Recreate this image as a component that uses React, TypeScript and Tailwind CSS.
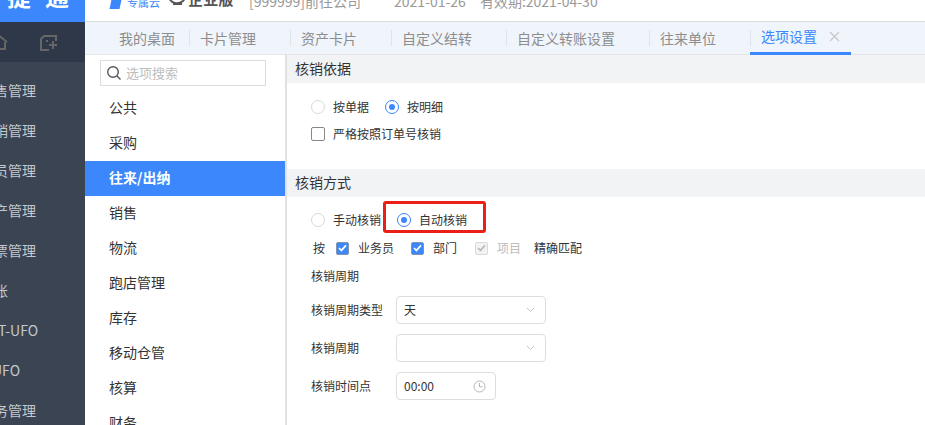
const font = { fontFamily: '"Noto Sans CJK SC", "Liberation Sans", sans-serif' };

const tabs = ["我的桌面", "卡片管理", "资产卡片", "自定义结转", "自定义转账设置", "往来单位"];
const navItems = [
  { text: "销售管理", offset: "ml-[-20px]" },
  { text: "营销管理", offset: "ml-[-20px]" },
  { text: "人员管理", offset: "ml-[-20px]" },
  { text: "资产管理", offset: "ml-[-20px]" },
  { text: "发票管理", offset: "ml-[-20px]" },
  { text: "总账", offset: "ml-[-20px]" },
  { text: "T-UFO", offset: "ml-[-2px]" },
  { text: "UFO", offset: "ml-[-8px]" },
  { text: "财务管理", offset: "ml-[-20px]" },
];
const options = ["公共", "采购", "往来/出纳", "销售", "物流", "跑店管理", "库存", "移动仓管", "核算", "财务"];

function Radio({ checked }: { checked?: boolean }) {
  return (
    <span
      className={`flex h-[14px] w-[14px] shrink-0 items-center justify-center rounded-full border bg-white ${
        checked ? "border-[#3b87fb]" : "border-[#d9d9d9]"
      }`}
    >
      {checked && <span className="h-[6px] w-[6px] rounded-full bg-[#3b87fb]" />}
    </span>
  );
}

function Check({ disabled }: { disabled?: boolean }) {
  return (
    <span
      className={`flex h-[13px] w-[13px] shrink-0 items-center justify-center rounded-[2px] border ${
        disabled ? "border-[#d9d9d9] bg-[#f3f3f3]" : "border-[#7f93ad] bg-[#3b87fb]"
      }`}
    >
      <svg width="9" height="8" viewBox="0 0 9 8" fill="none">
        <path d="M1 4l2.4 2.4L8 1.4" stroke={disabled ? "#bbbbbb" : "#ffffff"} strokeWidth="1.7" />
      </svg>
    </span>
  );
}

function SectionTitle({ text }: { text: string }) {
  return <div className="flex h-[28px] items-center bg-[#f2f3f5] pb-[2px] pl-[8px] text-[14px] text-[#333]">{text}</div>;
}

function SelectRow({ label, value }: { label: string; value?: string }) {
  return (
    <div className="flex h-[28px] items-center">
      <span className="w-[109px] shrink-0 pl-[24px] whitespace-nowrap">{label}</span>
      <div className="flex h-[28px] w-[150px] items-center justify-between rounded-[4px] border border-[#dedede] pr-[10px] pl-[7px]">
        <span>{value}</span>
        <svg width="9" height="6" viewBox="0 0 9 6" fill="none">
          <path d="M1 1l3.5 3.5L8 1" stroke="#c4c4c4" />
        </svg>
      </div>
    </div>
  );
}

export default function App() {
  return (
    <div className="flex h-[425px] w-[925px] overflow-hidden bg-white" style={font}>
      <div className="flex w-[85px] shrink-0 flex-col overflow-hidden bg-[#3a4453]">
        <div className="flex h-[22px] shrink-0 items-end gap-[14px] overflow-hidden bg-[#3b87fb] pb-[14px] pl-[7px] text-[24px] leading-none font-bold text-white">
          <span className="whitespace-nowrap">捷</span>
          <span className="whitespace-nowrap">通</span>
        </div>
        <div className="flex h-[40px] shrink-0 items-center justify-between bg-[#2e3848] pr-[28px]">
          <svg className="ml-[-9px]" width="17" height="17" viewBox="0 0 17 17" fill="none" stroke="#666" strokeWidth="2">
            <path d="M8.5 2L16 8M3 8v7h11V8" />
          </svg>
          <svg width="17" height="17" viewBox="0 0 17 17" fill="none" stroke="#666" strokeWidth="2">
            <path d="M16 7V2H4L1 5v11h8M13 7v8M9 11h8M6 7h2" />
          </svg>
        </div>
        <div className="flex flex-col pt-[8px]">
          {navItems.map((item) => (
            <div
              key={item.text}
              className={`flex h-[40px] shrink-0 items-center text-[14px] whitespace-nowrap text-[#c3c8ce] ${item.offset}`}
            >
              {item.text}
            </div>
          ))}
        </div>
      </div>

      <div className="flex min-w-0 flex-1 flex-col">
        <div className="flex h-[22px] shrink-0 items-end overflow-hidden border-b border-[#dcdcdc] bg-white whitespace-nowrap">
          <div className="mb-[13px] flex items-end leading-none">
            <span className="mb-[-1px] ml-[26px] h-[14px] w-[10px] -skew-x-12 bg-[#3b87fb]" />
            <span className="ml-[6px] text-[11px] text-[#3b87fb]">专属云</span>
            <svg className="mb-[2px] ml-[7px]" width="21" height="14" viewBox="0 0 21 14" fill="none" stroke="#555" strokeWidth="2">
              <path d="M1 4c3 8 10 9 15 5l3-4M6 12h9" />
            </svg>
            <span className="mb-[2px] text-[15px] font-bold tracking-[0.3px] text-[#555]">企业版</span>
            <span className="ml-[15px] text-[14px] text-[#999]">[999999]前往公司</span>
            <span className="ml-[33px] text-[14px] text-[#999]">2021-01-26</span>
            <span className="ml-[14px] text-[14px] text-[#999]">有效期:2021-04-30</span>
          </div>
        </div>

        <div className="flex h-[33px] shrink-0 items-center border-b border-[#e3e5e9] bg-[#f0f4fb] pl-[24px] text-[14px] text-[#8d8d8d]">
          {tabs.map((tab, i) => (
            <div
              key={tab}
              className={`flex h-[16px] items-center border-r border-[#dfe3ea] pl-[10px] whitespace-nowrap ${
                i === 0 ? "pr-[14px]" : "pr-[34px]"
              }`}
            >
              {tab}
            </div>
          ))}
          <div className="ml-[-1px] flex h-[33px] w-[101px] items-center border-b-[3px] border-[#3b87fb] pl-[11px] whitespace-nowrap text-[#3b87fb]">
            选项设置
            <svg className="ml-[12px]" width="11" height="11" viewBox="0 0 11 11" fill="none">
              <path d="M1 1l9 9M10 1l-9 9" stroke="#c6c9cd" strokeWidth="1.3" />
            </svg>
          </div>
        </div>

        <div className="flex min-h-0 flex-1">
          <div className="w-[202px] shrink-0 overflow-hidden border-r-2 border-[#e1e1e1]">
            <div className="mt-[5px] ml-[15px] flex h-[26px] w-[166px] items-center border border-[#dcdcdc] pl-[5px] text-[13px] text-[#bdbdbd]">
              <svg width="16" height="16" viewBox="0 0 16 16" fill="none" stroke="#555" strokeWidth="1.4">
                <circle cx="7" cy="7" r="5.3" />
                <path d="M11 11l3.5 3.5" />
              </svg>
              <span className="ml-[4px]">选项搜索</span>
            </div>
            <div className="mt-[5px] flex flex-col text-[14px] text-[#333]">
              {options.map((item) => (
                <div
                  key={item}
                  className={`flex h-[35px] shrink-0 items-center pb-[2px] pl-[24px] ${
                    item === "往来/出纳" ? "bg-[#3b87fb] font-bold text-white" : ""
                  }`}
                >
                  {item}
                </div>
              ))}
            </div>
          </div>

          <div className="min-w-0 flex-1 text-[12px] text-[#333]">
            <SectionTitle text="核销依据" />
            <div className="flex h-[48px] items-center pl-[24px]">
              <Radio />
              <span className="ml-[8px]">按单据</span>
              <span className="ml-[16px]"><Radio checked /></span>
              <span className="ml-[8px]">按明细</span>
            </div>
            <div className="mt-[-6px] flex items-center pl-[24px]">
              <span className="h-[14px] w-[14px] rounded-[2px] border border-[#888]" />
              <span className="ml-[8px]">严格按照订单号核销</span>
            </div>
            <div className="h-[26px]" />
            <SectionTitle text="核销方式" />
            <div className="mt-[4px] flex h-[32px] items-center pl-[24px]">
              <span className="mt-[6px]"><Radio /></span>
              <span className="mt-[6px] ml-[8px] whitespace-nowrap">手动核销</span>
              <span className="ml-[2px] flex h-[32px] w-[103px] items-center rounded-[3px] border-[3px] border-[#ea1f17] pt-[6px] pl-[11px]">
                <Radio checked />
                <span className="ml-[8px] whitespace-nowrap">自动核销</span>
              </span>
            </div>
            <div className="mt-[3px] flex h-[24px] items-center pl-[26px] whitespace-nowrap">
              按
              <span className="ml-[11px]"><Check /></span>
              <span className="ml-[9px]">业务员</span>
              <span className="ml-[17px]"><Check /></span>
              <span className="ml-[9px]">部门</span>
              <span className="ml-[18px]"><Check disabled /></span>
              <span className="ml-[9px] text-[#bdbdbd]">项目</span>
              <span className="ml-[13px]">精确匹配</span>
            </div>
            <div className="mt-[7px] pl-[24px] leading-[18px]">核销周期</div>
            <div className="mt-[11px] flex flex-col gap-[10px]">
              <SelectRow label="核销周期类型" value="天" />
              <SelectRow label="核销周期" />
              <div className="flex h-[28px] items-center">
                <span className="w-[109px] shrink-0 pl-[24px]">核销时间点</span>
                <div className="flex h-[28px] w-[100px] items-center justify-between rounded-[4px] border border-[#dedede] pr-[9px] pl-[7px]">
                  <span>00:00</span>
                  <svg width="13" height="13" viewBox="0 0 13 13" fill="none" stroke="#b5b5b5">
                    <circle cx="6.5" cy="6.5" r="5.5" />
                    <path d="M6.5 3v3.8h3" />
                  </svg>
                </div>
              </div>
            </div>
          </div>
        </div>
      </div>
    </div>
  );
}
